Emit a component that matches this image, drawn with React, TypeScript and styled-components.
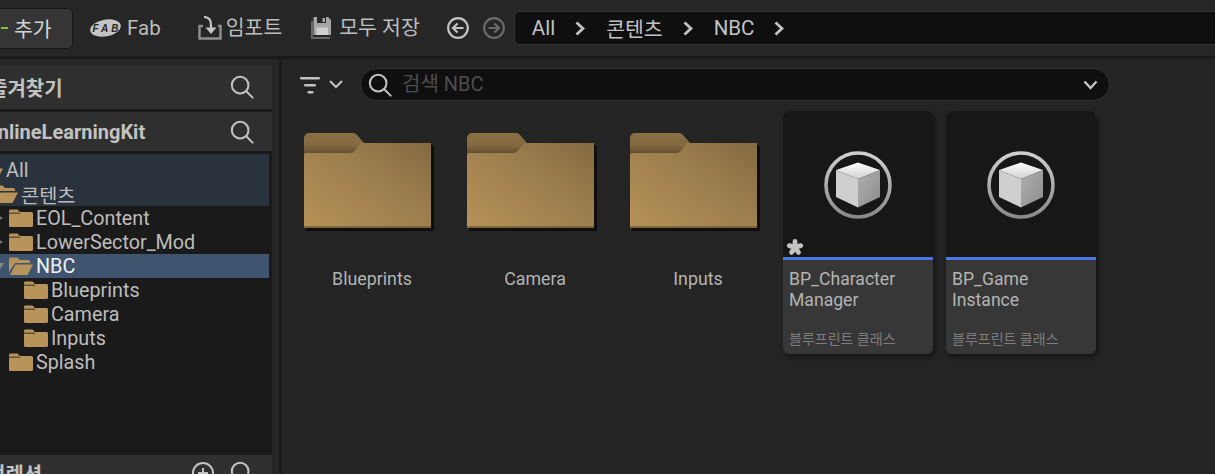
import React from "react";
import styled, { createGlobalStyle } from "styled-components";

const Global = createGlobalStyle`
  html, body { margin: 0; padding: 0; background: #242424; }
  * { box-sizing: border-box; }
`;

const font = `Roboto, "Noto Sans CJK KR", "Noto Sans", sans-serif`;

const Page = styled.div`
  width: 1215px;
  height: 474px;
  overflow: hidden;
  display: flex;
  flex-direction: column;
  background: #1a1a1a;
  font-family: ${font};
`;

const TopBar = styled.header`
  height: 56px;
  flex: none;
  display: flex;
  align-items: center;
  background: #262626;
`;

const AddButton = styled.button`
  margin-left: -12px;
  width: 85px;
  height: 41px;
  flex: none;
  display: flex;
  align-items: center;
  gap: 6px;
  padding: 0 0 0 12px;
  background: #353535;
  border: 1px solid #161616;
  border-radius: 5px;
  color: #d4d4d4;
  font: 400 20.5px ${font};
`;

const PlusBar = styled.span`
  width: 7px;
  height: 2px;
  background: #7fc332;
`;

const ToolItem = styled.div<{ $left: number; $gap: number }>`
  margin-left: ${(p) => p.$left}px;
  display: flex;
  flex: none;
  align-items: center;
  gap: ${(p) => p.$gap}px;
  color: #bdbdbd;
  font-size: 20.5px;
  line-height: 24px;
  white-space: nowrap;
`;

const NavButton = styled.span<{ $left: number; $dim?: boolean }>`
  margin-left: ${(p) => p.$left}px;
  display: flex;
  flex: none;
  color: ${(p) => (p.$dim ? "#6b6b6b" : "#c4c4c4")};
`;

const Breadcrumb = styled.nav`
  margin-left: 9px;
  flex: none;
  width: 760px;
  height: 34px;
  display: flex;
  align-items: center;
  padding-left: 17px;
  background: #0f0f0f;
  border: 1px solid #333;
  border-radius: 5px;
  color: #c2c2c2;
  font-size: 20.5px;
`;

const Crumb = styled.span`
  margin-right: 20px;
  white-space: nowrap;
`;

const CrumbArrow = styled.span`
  display: flex;
  margin-right: 21px;
  color: #c2c2c2;
`;

const Body = styled.div`
  flex: 1;
  min-height: 0;
  margin-top: 3px;
  display: flex;
`;

const Sidebar = styled.aside`
  width: 279px;
  flex: none;
  display: flex;
  flex-direction: column;
  padding: 6px 7px 0 0;
  background: #262626;
  overflow: hidden;
`;

const PanelHeader = styled.div<{ $height: number; $offset: number }>`
  height: ${(p) => p.$height}px;
  flex: none;
  display: flex;
  align-items: center;
  background: #2f2f2f;
  color: #c2c2c2;
  font-size: 20px;
  font-weight: 700;
  white-space: nowrap;
  overflow: hidden;
  padding-right: 18px;
  & > span:first-child {
    margin-left: ${(p) => p.$offset}px;
    flex: 1;
  }
`;

const HeaderGap = styled.div`
  height: 3px;
  flex: none;
  background: #1c1c1c;
`;

const HeaderIcon = styled.span<{ $left?: number }>`
  display: flex;
  flex: none;
  margin-left: ${(p) => p.$left ?? 0}px;
  color: #c2c2c2;
`;

const Tree = styled.div`
  height: 301px;
  flex: none;
  background: #1a1a1a;
  padding: 3px 3px 0 0;
  overflow: hidden;
`;

const Row = styled.div<{ $level: number; $tone?: "soft" | "active"; $first?: boolean }>`
  height: ${(p) => (p.$first ? 28 : 24)}px;
  padding-top: ${(p) => (p.$first ? 4 : 0)}px;
  display: flex;
  align-items: center;
  padding-left: ${(p) => p.$level * 15}px;
  margin-left: -21px;
  background: ${(p) =>
    p.$tone === "active" ? "#3f556f" : p.$tone === "soft" ? "#2a333d" : "transparent"};
  color: ${(p) => (p.$tone === "active" ? "#f0f0f0" : "#bdbdbd")};
  font-size: 19.75px;
  white-space: nowrap;
`;

const Caret = styled.span`
  width: 10px;
  margin-left: -14px;
  margin-right: 4px;
  flex: none;
  display: flex;
  justify-content: center;
`;

const RowFolder = styled.span`
  display: flex;
  flex: none;
  margin-right: 3px;
`;

const Divider = styled.div`
  width: 3px;
  flex: none;
  background: #1a1a1a;
`;

const Content = styled.main`
  flex: 1;
  min-width: 0;
  background: #242424;
  padding: 9px 0 0 18px;
`;

const FilterRow = styled.div`
  display: flex;
  align-items: center;
  height: 33px;
`;

const FilterButton = styled.span`
  display: flex;
  align-items: center;
  gap: 9px;
  width: 60px;
  flex: none;
  color: #c2c2c2;
`;

const SearchBox = styled.div`
  width: 750px;
  height: 33px;
  flex: none;
  display: flex;
  align-items: center;
  padding: 0 11px 0 7px;
  background: #0f0f0f;
  border: 1px solid #333;
  border-radius: 17px;
`;

const SearchText = styled.span`
  margin-left: 10px;
  margin-bottom: 5px;
  flex: 1;
  color: #4d4d4d;
  font-size: 20px;
`;

const Tiles = styled.div`
  display: flex;
  margin-top: 10px;
  margin-left: -11px;
  align-items: flex-start;
`;

const FolderTile = styled.div`
  width: 163px;
  flex: none;
  display: flex;
  flex-direction: column;
  align-items: center;
`;

const FolderArt = styled.span`
  display: flex;
  margin: 22px 3px 0 0;
`;

const FolderLabel = styled.div`
  margin-top: 35px;
  margin-left: 3px;
  color: #b4b4b4;
  font-size: 17.8px;
  line-height: 22px;
`;

const Card = styled.article<{ $first?: boolean }>`
  width: 150px;
  height: 243px;
  flex: none;
  margin-left: ${(p) => (p.$first ? 5 : 13)}px;
  display: flex;
  flex-direction: column;
  border-radius: 6px;
  overflow: hidden;
  background: #373737;
  box-shadow: 2px 3px 5px rgba(0, 0, 0, 0.45);
`;

const Thumb = styled.div`
  position: relative;
  height: 149px;
  flex: none;
  display: flex;
  align-items: flex-start;
  justify-content: center;
  padding-top: 40px;
  background: #171717;
  border-bottom: 3px solid #4a78e0;
`;

const Dirty = styled.span`
  position: absolute;
  left: 3px;
  bottom: 1px;
  display: flex;
  filter: blur(0.7px);
`;

const CardInfo = styled.div`
  flex: 1;
  display: flex;
  flex-direction: column;
  padding: 9px 6px 6px;
`;

const CardName = styled.div`
  flex: 1;
  color: #b4b4b4;
  font-size: 17.6px;
  line-height: 21px;
`;

const CardType = styled.div`
  color: #7d7d7d;
  font-size: 14px;
  line-height: 18px;
`;

const SearchIcon = ({ size = 26 }: { size?: number }) => (
  <svg width={size} height={size} viewBox="0 0 26 26" fill="none" stroke="currentColor" strokeWidth="2.2">
    <circle cx="11" cy="11" r="9" />
    <path d="M17.6 17.6 24.500 24.500" strokeLinecap="round" />
  </svg>
);

const ClosedFolder = () => (
  <svg width="24" height="18" viewBox="0 0 24 18">
    <path d="M0 2a1.500 1.500 0 0 1 1.500-1.500h7L11 3h11.500A1.500 1.500 0 0 1 24 4.500v12a1.500 1.500 0 0 1-1.500 1.500h-21A1.500 1.500 0 0 1 0 16.500z" fill="#b8935a" />
    <path d="M0 3.600h10.500L11.600 5H0z" fill="#1a1a1a" opacity="0.55" />
  </svg>
);

const OpenFolder = () => (
  <svg width="24" height="18" viewBox="0 0 24 18">
    <path d="M0 2a1.500 1.500 0 0 1 1.500-1.500h7L11 3h8.500A1.500 1.500 0 0 1 21 4.500V6H6L0 15z" fill="#b8935a" />
    <path d="M6.500 7.500H24L18.500 18H1z" fill="#b8935a" />
  </svg>
);

const CaretRight = () => (
  <svg width="5" height="6" viewBox="0 0 5 6"><path d="M0 0l5 3-5 3z" fill="#777" /></svg>
);

const CaretDown = () => (
  <svg width="8" height="6" viewBox="0 0 8 6"><path d="M0 0h8L4 6z" fill="#8a8a8a" /></svg>
);

const BigFolder = ({ id }: { id: string }) => (
  <svg width="131" height="100" viewBox="0 0 131 100">
    <defs>
      <linearGradient id={`body${id}`} x1="0" y1="1" x2="1" y2="0.1">
        <stop offset="0" stopColor="#b69257" />
        <stop offset="0.6" stopColor="#9d7e4e" />
        <stop offset="1" stopColor="#876c42" />
      </linearGradient>
      <linearGradient id={`tab${id}`} x1="0" y1="0" x2="0" y2="1">
        <stop offset="0" stopColor="#8a6f43" />
        <stop offset="0.55" stopColor="#826940" />
        <stop offset="1" stopColor="#5e4a2d" />
      </linearGradient>
    </defs>
    <path d="M2 12h125a3 3 0 0 1 3 3v83H2z" fill="#0c0c0c" opacity="0.9" />
    <path d="M0 5a5 5 0 0 1 5-5h44a5 5 0 0 1 4 2l7 8H127v12H0z" fill={`url(#tab${id})`} />
    <path d="M0 22a2 2 0 0 1 2-2h44c2 0 3.500-.7 4.700-2l6.300-8h67a3 3 0 0 1 3 3v82H0z" fill={`url(#body${id})`} />
    <path d="M0 93h127v2H0z" fill="#6f5835" opacity="0.75" />
  </svg>
);

const BlueprintIcon = ({ id }: { id: string }) => (
  <svg width="68" height="68" viewBox="0 0 68 68">
    <defs>
      <linearGradient id={`ring${id}`} x1="0" y1="0" x2="0" y2="1">
        <stop offset="0" stopColor="#cfcfcf" />
        <stop offset="1" stopColor="#8a8a8a" />
      </linearGradient>
      <linearGradient id={`top${id}`} x1="0" y1="0" x2="0" y2="1">
        <stop offset="0" stopColor="#ffffff" />
        <stop offset="1" stopColor="#d0d0d0" />
      </linearGradient>
      <linearGradient id={`side${id}`} x1="0" y1="0" x2="1" y2="1">
        <stop offset="0" stopColor="#b0b0b0" />
        <stop offset="1" stopColor="#8c8c8c" />
      </linearGradient>
    </defs>
    <circle cx="34" cy="34" r="32" fill="none" stroke={`url(#ring${id})`} strokeWidth="3.600" />
    <path d="M34 11.500 56 19 34 28 12 19z" fill={`url(#top${id})`} />
    <path d="M12 19 34 28V56.500L12 46z" fill="#cfcfcf" />
    <path d="M56 19 34 28V56.500L56 46z" fill={`url(#side${id})`} />
  </svg>
);

const Chevron = () => (
  <svg width="10" height="15" viewBox="0 0 10 15" fill="none" stroke="currentColor" strokeWidth="2.800">
    <path d="M1.500 1.500 8 7.500 1.500 13.500" />
  </svg>
);

const App = () => (
  <Page>
    <Global />
    <TopBar>
      <AddButton>
        <PlusBar />
        추가
      </AddButton>
      <ToolItem $left={17} $gap={6}>
        <svg width="31" height="20" viewBox="0 0 31 20">
          <ellipse cx="15.500" cy="10" rx="15.500" ry="8.500" fill="#c4c4c4" transform="rotate(-10 15.500 10)" />
          <text x="15.500" y="13.500" textAnchor="middle" fontFamily="Liberation Sans" fontWeight="700" fontStyle="italic" fontSize="10" textLength="26" fill="#262626">FAB</text>
        </svg>
        Fab
      </ToolItem>
      <ToolItem $left={37} $gap={4}>
        <svg width="24" height="24" viewBox="0 0 24 24" fill="none">
          <path d="M5 10H1.500v12.500h21V10H20" stroke="#8f8f8f" strokeWidth="2.400" />
          <path d="M6 1c5 0 7 3 7 8v3" stroke="#c4c4c4" strokeWidth="2.200" />
          <path d="M7.500 11.500h11L13 18z" fill="#c4c4c4" />
        </svg>
        임포트
      </ToolItem>
      <ToolItem $left={29} $gap={8}>
        <svg width="20" height="22" viewBox="0 0 20 22">
          <path d="M0 4h2v16h17v2H0z" fill="#666" />
          <path d="M2.500 0H17l3 3v15H2.500z" fill="#a6a6a6" />
          <path d="M6 0h9v6H6z" fill="#262626" />
          <path d="M11.500 1h2.500v4h-2.500z" fill="#a6a6a6" />
          <path d="M5.500 10.500h11.500V18H5.500z" fill="#d0d0d0" />
        </svg>
        모두 저장
      </ToolItem>
      <NavButton $left={27}>
        <svg width="22" height="22" viewBox="0 0 22 22" fill="none" stroke="currentColor" strokeWidth="2.200">
          <circle cx="11" cy="11" r="9.800" />
          <path d="M16.500 11H6.500M10.500 6.500 6 11l4.500 4.500" />
        </svg>
      </NavButton>
      <NavButton $left={14} $dim>
        <svg width="22" height="22" viewBox="0 0 22 22" fill="none" stroke="currentColor" strokeWidth="2.200">
          <circle cx="11" cy="11" r="9.800" />
          <path d="M5.500 11h10M11.500 6.500 16 11l-4.500 4.500" />
        </svg>
      </NavButton>
      <Breadcrumb>
        <Crumb>All</Crumb>
        <CrumbArrow><Chevron /></CrumbArrow>
        <Crumb>콘텐츠</Crumb>
        <CrumbArrow><Chevron /></CrumbArrow>
        <Crumb>NBC</Crumb>
        <CrumbArrow><Chevron /></CrumbArrow>
      </Breadcrumb>
    </TopBar>
    <Body>
      <Sidebar>
        <PanelHeader $height={44} $offset={-11}>
          <span>즐겨찾기</span>
          <HeaderIcon><SearchIcon size={24} /></HeaderIcon>
        </PanelHeader>
        <HeaderGap />
        <PanelHeader $height={39} $offset={-16}>
          <span>OnlineLearningKit</span>
          <HeaderIcon><SearchIcon size={24} /></HeaderIcon>
        </PanelHeader>
        <Tree>
          <Row $level={0} $tone="soft" $first><RowFolder><OpenFolder /></RowFolder>All</Row>
          <Row $level={1} $tone="soft"><RowFolder><OpenFolder /></RowFolder>콘텐츠</Row>
          <Row $level={2}><Caret><CaretRight /></Caret><RowFolder><ClosedFolder /></RowFolder>EOL_Content</Row>
          <Row $level={2}><Caret><CaretRight /></Caret><RowFolder><ClosedFolder /></RowFolder>LowerSector_Mod</Row>
          <Row $level={2} $tone="active"><Caret><CaretDown /></Caret><RowFolder><OpenFolder /></RowFolder>NBC</Row>
          <Row $level={3}><RowFolder><ClosedFolder /></RowFolder>Blueprints</Row>
          <Row $level={3}><RowFolder><ClosedFolder /></RowFolder>Camera</Row>
          <Row $level={3}><RowFolder><ClosedFolder /></RowFolder>Inputs</Row>
          <Row $level={2}><RowFolder><ClosedFolder /></RowFolder>Splash</Row>
        </Tree>
        <HeaderGap />
        <PanelHeader $height={36} $offset={-13}>
          <span>컬렉션</span>
          <HeaderIcon>
            <svg width="24" height="24" viewBox="0 0 24 24" fill="none" stroke="currentColor" strokeWidth="2">
              <circle cx="12" cy="12" r="10" />
              <path d="M12 7v10M7 12h10" />
            </svg>
          </HeaderIcon>
          <HeaderIcon $left={15}><SearchIcon size={24} /></HeaderIcon>
        </PanelHeader>
      </Sidebar>
      <Divider />
      <Content>
        <FilterRow>
          <FilterButton>
            <svg width="20" height="18" viewBox="0 0 20 18" fill="currentColor">
              <rect x="0" y="1" width="20" height="2.600" rx="1.300" />
              <rect x="4" y="8" width="12" height="2.600" rx="1.300" />
              <rect x="7.500" y="15" width="6" height="2.600" rx="1.300" />
            </svg>
            <svg width="14" height="9" viewBox="0 0 14 9" fill="none" stroke="currentColor" strokeWidth="2">
              <path d="M1 1l6 6 6-6" />
            </svg>
          </FilterButton>
          <SearchBox>
            <HeaderIcon><SearchIcon size={24} /></HeaderIcon>
            <SearchText>검색 NBC</SearchText>
            <svg width="15" height="10" viewBox="0 0 15 10" fill="none" stroke="#c4c4c4" strokeWidth="2.400">
              <path d="M1.500 1.500 7.500 8l6-6.500" />
            </svg>
          </SearchBox>
        </FilterRow>
        <Tiles>
          {["Blueprints", "Camera", "Inputs"].map((name) => (
            <FolderTile key={name}>
              <FolderArt><BigFolder id={name} /></FolderArt>
              <FolderLabel>{name}</FolderLabel>
            </FolderTile>
          ))}
          <Card $first>
            <Thumb>
              <BlueprintIcon id="a" />
              <Dirty>
                <svg width="18" height="18" viewBox="0 0 18 18" fill="none" stroke="#c4c4c4" strokeWidth="4.800" strokeLinecap="round">
                  <path d="M9 9.500V3.500M9 9.500l5.700-1.900M9 9.500l3.500 4.900M9 9.500l-3.500 4.900M9 9.500 3.300 7.600" />
                </svg>
              </Dirty>
            </Thumb>
            <CardInfo>
              <CardName>BP_Character<br />Manager</CardName>
              <CardType>블루프린트 클래스</CardType>
            </CardInfo>
          </Card>
          <Card>
            <Thumb>
              <BlueprintIcon id="b" />
            </Thumb>
            <CardInfo>
              <CardName>BP_Game<br />Instance</CardName>
              <CardType>블루프린트 클래스</CardType>
            </CardInfo>
          </Card>
        </Tiles>
      </Content>
    </Body>
  </Page>
);

export default App;
